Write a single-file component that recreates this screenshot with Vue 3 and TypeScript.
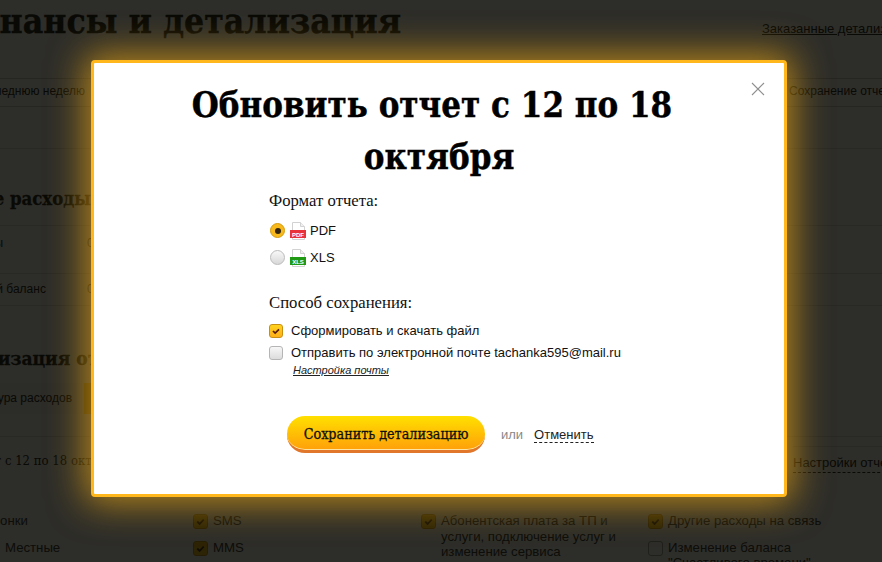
<script setup lang="ts">
interface Filter { label: string; checked: boolean; sub?: boolean }
const filterCols: Filter[][] = [
  [{ label: 'Телефонки', checked: true }, { label: 'Местные', checked: true, sub: true }],
  [{ label: 'SMS', checked: true }, { label: 'MMS', checked: true }],
  [{ label: 'Абонентская плата за ТП и услуги, подключение услуг и изменение сервиса', checked: true }],
  [{ label: 'Другие расходы на связь', checked: true }, { label: 'Изменение баланса "Счастливого времени"', checked: false }]
]
</script>

<template>
  <div class="viewport">
    <div class="page">
      <header class="page-head">
        <h1>Финансы и детализация</h1>
        <a class="head-link">Заказанные детализации</a>
      </header>
      <div class="tabs">
        <span class="tabs-left">За последнюю неделю</span>
        <span class="tabs-right">Сохранение отчетов</span>
      </div>
      <section class="summary">
        <h2>Общие расходы</h2>
        <div class="sum-row first"><span class="sum-name">Расходы</span><span>0</span></div>
        <div class="sum-row"><span class="sum-name">Текущий баланс</span><span>0</span></div>
      </section>
      <section class="detail">
        <h2 class="detail-title">Детализация отчета</h2>
        <div class="detail-tabs">
          <span class="detail-tab">Структура расходов</span>
          <span class="detail-active"></span>
        </div>
        <div class="report-bar">
          <span class="report-name">Отчет с 12 по 18 октября</span>
          <div class="report-side">
            <a class="report-settings">Настройки отчета</a>
          </div>
        </div>
        <div class="filters">
          <div v-for="(col, i) in filterCols" :key="i" class="filter-col">
            <div v-for="f in col" :key="f.label" class="filter" :class="{ sub: f.sub }">
              <span class="mini-check" :class="{ on: f.checked }">
                <svg v-if="f.checked" viewBox="0 0 14 14"><path d="M3.5 7l2.5 2.5 4.5-4.5" fill="none" stroke="#3a1d00" stroke-width="2" /></svg>
              </span>
              <span class="filter-text">{{ f.label }}</span>
            </div>
          </div>
        </div>
      </section>
    </div>

    <div class="overlay">
      <div class="modal">
        <svg class="close" viewBox="0 0 14 14"><path d="M1 1l12 12M13 1L1 13" fill="none" stroke="#8f8f8f" stroke-width="1.1" /></svg>
        <h3>Обновить отчет с 12 по 18 октября</h3>
        <div class="form">
          <div class="form-label">Формат отчета:</div>
          <label class="opt">
            <span class="radio on"><i></i></span>
            <svg class="file" viewBox="0 0 17 18">
              <path d="M2.5.5h8l4 4v13h-12z" fill="#fff" stroke="#d2d2d2" />
              <path d="M10.5.5v4h4" fill="#f0f0f0" stroke="#d2d2d2" />
              <rect x="0" y="8" width="16" height="8" fill="#e8323c" />
              <text x="8" y="14.6" text-anchor="middle" class="file-text">PDF</text>
            </svg>
            <span>PDF</span>
          </label>
          <label class="opt">
            <span class="radio"></span>
            <svg class="file" viewBox="0 0 17 18">
              <path d="M2.5.5h8l4 4v13h-12z" fill="#fff" stroke="#d2d2d2" />
              <path d="M10.5.5v4h4" fill="#f0f0f0" stroke="#d2d2d2" />
              <rect x="0" y="8" width="16" height="8" fill="#1f9a12" />
              <text x="8" y="14.6" text-anchor="middle" class="file-text">XLS</text>
            </svg>
            <span>XLS</span>
          </label>
          <div class="form-label second">Способ сохранения:</div>
          <label class="chk first">
            <span class="check on">
              <svg viewBox="0 0 14 14"><path d="M3.5 7l2.5 2.5 4.5-4.5" fill="none" stroke="#5a1c10" stroke-width="2" /></svg>
            </span>
            <span>Сформировать и скачать файл</span>
          </label>
          <label class="chk">
            <span class="check"></span>
            <span>Отправить по электронной почте tachanka595@mail.ru</span>
          </label>
          <a class="mail-link">Настройка почты</a>
        </div>
        <div class="actions">
          <button class="save" type="button">Сохранить детализацию</button>
          <span class="or">или</span>
          <a class="cancel">Отменить</a>
        </div>
      </div>
    </div>
  </div>
</template>

<style>
html, body { margin: 0; background: #2e2e2c; overflow: hidden; }
</style>

<style scoped>
.viewport {
  position: relative;
  width: 882px;
  height: 562px;
  overflow: hidden;
  font-family: "Liberation Sans", Arial, sans-serif;
  color: #000;
  background: #fff;
}
.page {
  width: 1120px;
  height: 562px;
  margin-left: -62px;
  font-size: 12px;
}
h1, h2, h3 { margin: 0; font-family: "DejaVu Serif", serif; font-stretch: condensed; font-weight: 700; }
.page-head { height: 78px; display: flex; align-items: flex-start; border-bottom: 1px solid #c8c8c8; }
.page-head h1 { font-size: 35.2px; line-height: 42px; width: 816px; padding-left: 8px; white-space: nowrap; -webkit-text-stroke: 0.4px #000; }
.head-link { margin-top: 21px; text-decoration: underline; font-size: 13px; line-height: 15px; white-space: nowrap; }
.tabs { height: 27px; line-height: 25px; display: flex; border-bottom: 1px solid #c8c8c8; }
.tabs-left { width: 831px; padding-left: 20px; white-space: nowrap; }
.tabs-right { white-space: nowrap; }
.summary { margin-top: 41px; border-top: 1px solid #d8d8d8; }
.summary h2 { font-size: 18.4px; line-height: 24px; padding-top: 38px; height: 38px; border-bottom: 1px solid #d8d8d8; white-space: nowrap; -webkit-text-stroke: 0.3px #000; }
.sum-row { display: flex; height: 31px; line-height: 30px; border-bottom: 1px solid #d8d8d8; padding-left: 17px; }
.sum-row.first { height: 47px; line-height: 34px; }
.sum-name { width: 132px; }
.detail-title { font-size: 19px; line-height: 24px; margin-top: 40px; white-space: nowrap; -webkit-text-stroke: 0.3px #000; }
.detail-tabs { display: flex; height: 31px; margin-top: 13px; align-items: stretch; }
.detail-tab { width: 146px; box-sizing: border-box; padding-right: 12px; text-align: right; line-height: 30px; background: #f4f4f4; }
.detail-active { width: 140px; background: #ffc000; }
.report-bar {
  display: flex;
  margin-top: 22px;
  padding: 12px 0 0 26px;
  height: 50px;
  box-sizing: border-box;
  border-top: 1px solid #d8d8d8;
}
.report-name { width: 829px; font-size: 13px; font-family: "DejaVu Serif", serif; font-stretch: condensed; line-height: 24px; white-space: nowrap; }
.report-side { margin-top: -3px; padding-top: 7px; border-top: 1px solid #d8d8d8; flex: 1; }
.report-settings { display: inline-block; font-size: 13px; line-height: 18px; border-bottom: 1px dashed #000; white-space: nowrap; }
.filters { display: grid; grid-template-columns: 253px 228px 227px 240px; padding: 27px 0 0 2px; }
.filter { display: flex; gap: 5px; font-size: 13.2px; line-height: 15.5px; margin-bottom: 10.5px; color: #222; }
.filter-text { max-width: 180px; }
.filter.sub { margin-left: 45px; }
.mini-check { flex: none; width: 13px; height: 13px; margin-top: 1px; border: 1px solid #999; border-radius: 3px; background: #fff; }
.mini-check.on { border-color: #c89000; background: #ffc000; }
.mini-check svg { display: block; width: 13px; height: 13px; }

.overlay { position: absolute; inset: 0; background: rgba(10, 10, 6, 0.86); }
.modal {
  position: absolute;
  left: 91px;
  top: 60px;
  width: 696px;
  height: 437px;
  box-sizing: border-box;
  border: 3px solid #ffb71b;
  border-radius: 4px;
  background: #fff;
  box-shadow: 0 0 36px 6px rgba(255, 180, 20, 0.66);
}
.close { position: absolute; right: 19px; top: 19px; width: 14px; height: 14px; }
.modal h3 {
  font-size: 34.5px;
  line-height: 52px;
  width: 520px;
  margin: 16px auto 0;
  text-align: center;
  text-indent: -14px;
  color: #000;
  -webkit-text-stroke: 0.4px #000;
}
.form { margin: 8px 0 0 175px; }
.form-label { font-family: "Liberation Serif", serif; font-size: 16.7px; line-height: 20px; color: #111; }
.form-label.second { margin-top: 22px; }
.opt { display: flex; align-items: center; height: 27px; font-size: 13px; color: #111; }
.opt:first-of-type { margin-top: 6px; }
.radio {
  width: 13px;
  height: 13px;
  border: 1px solid #bbb;
  border-radius: 50%;
  background: linear-gradient(#f8f8f8, #d8d8d8);
  margin: 0 5px 0 1px;
  display: flex;
  align-items: center;
  justify-content: center;
}
.radio.on { border-color: #d49a10; background: #f8b91c; }
.radio i { width: 6px; height: 6px; border-radius: 50%; background: #32240e; }
.file { width: 17px; height: 18px; margin-right: 3px; }
.file-text { font: 700 6px "Liberation Sans", sans-serif; fill: #fff; }
.chk { display: flex; align-items: center; font-size: 13px; line-height: 15px; color: #111; gap: 8px; margin-top: 7px; }
.chk.first { margin-top: 10px; }
.check {
  width: 12px;
  height: 12px;
  border: 1px solid #b5b5b5;
  border-radius: 3px;
  background: linear-gradient(#f7f7f7, #dcdcdc);
  display: block;
  flex: none;
}
.check.on { border-color: #c98f10; background: linear-gradient(#ffd21c, #ffb01a); }
.check svg { display: block; width: 12px; height: 12px; }
.mail-link {
  display: inline-block;
  margin: -1px 0 0 24px;
  font-size: 11px;
  line-height: 13px;
  font-style: italic;
  text-decoration: underline;
  color: #222;
}
.actions {
  position: absolute;
  left: 193px;
  top: 353px;
  display: flex;
  align-items: center;
}
.save {
  width: 198px;
  height: 37px;
  padding: 1px 0 0;
  border: 0;
  border-bottom: 3px solid #e0772a;
  border-radius: 18px;
  background: linear-gradient(#ffe000, #ff9f0a);
  box-shadow: inset 0 -1px 0 #ffe3a0;
  font-family: "DejaVu Serif", serif;
  font-stretch: condensed;
  font-weight: 400;
  font-size: 14.2px;
  -webkit-text-stroke: 0.3px #111;
  color: #111;
  white-space: nowrap;
}
.or { margin-left: 16px; font-size: 13px; color: #888; }
.cancel { margin-left: 11px; font-size: 13px; line-height: 15px; color: #222; border-bottom: 1px dashed #222; }
</style>
